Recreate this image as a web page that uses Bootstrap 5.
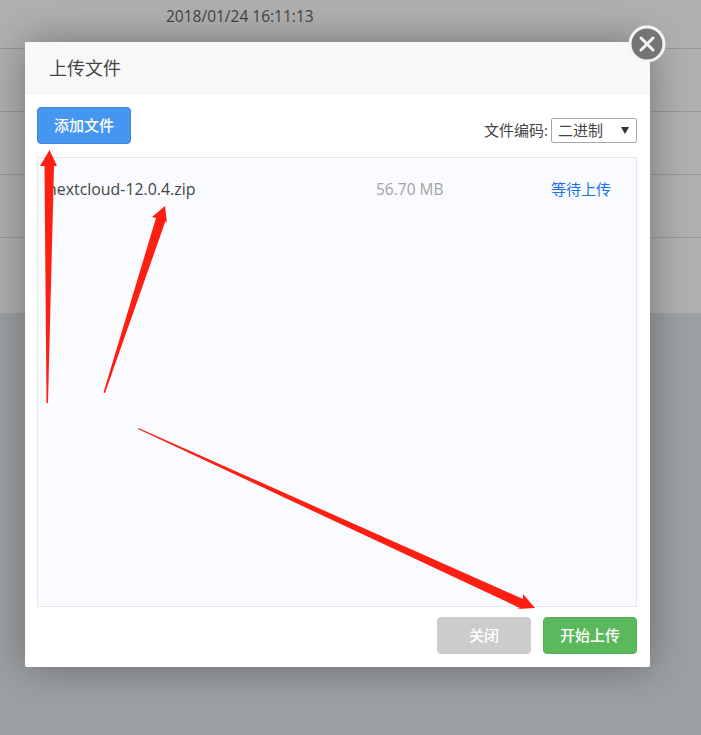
<!DOCTYPE html>
<html lang="zh"><head><meta charset="utf-8"><title>上传文件</title>
<link href="https://cdn.jsdelivr.net/npm/bootstrap@5.3.0/dist/css/bootstrap.min.css" rel="stylesheet">
<style>
html,body{height:100%;margin:0}
body{width:701px;height:735px;overflow:hidden;position:relative;background:#9da0a3;font-family:"Open Sans","Noto Sans CJK SC",sans-serif;font-size:15px;color:#444}
.bg-top{height:313px;background:#b0b0b0}
.bg-row{height:63px;border-bottom:1px solid #999;padding-left:166px;padding-top:7px;color:#444;line-height:19px;font-size:15.5px}
.bg-row:first-child{height:49px}
.up-modal{position:absolute;left:25px;top:42px;width:625px;height:625px;background:#fff;border-radius:2px;box-shadow:0 0 40px rgba(0,0,0,.35);display:flex;flex-direction:column}
.up-head{height:52px;flex:none;background:#f8f8f8;border-bottom:1px solid #eee;padding:0 24px;font-size:18px;line-height:52px;color:#444}
.up-body{padding:13px 13px 0 12px;flex:1;display:flex;flex-direction:column}
.up-bar{height:50px;flex:none}
.up-btn{width:94px;height:37px;padding:0 0 2px;font-size:15px;font-weight:500;color:#fff;border-radius:4px;line-height:32px}
.up-btn:disabled{opacity:1;color:#fff;background:#ccc;border:1px solid #ccc}
.up-blue{background:#4596f0;border:1px solid #3f87d8}
.up-green{background:#5cb85c;border:1px solid #55ae55}
.up-enc{margin-top:11px;gap:3px;line-height:25px}
.up-pick{position:relative;display:block;width:86px;height:25px}
.up-pick::after{content:"";position:absolute;left:70px;top:9px;border-style:solid;border-width:7px 4px 0;border-color:#333 transparent transparent}
.up-select{appearance:none;-webkit-appearance:none;display:block;width:86px;height:25px;border:1px solid #a6a6a6;border-radius:2px;background:#fff;padding:0 6px;font-size:15px;line-height:21px;color:#444;font-family:inherit}
.up-panel{height:450px;flex:none;background:#f9fbff;border:1px solid #e4e6ea;padding:21px 0 0 9px;line-height:20px}
.up-name{width:329px;font-size:15.9px}
.up-size{color:#a2a2a2;width:175px;font-size:15.5px}
.up-state{color:#1a73e8}
.up-foot{margin-top:10px;gap:12px}
.up-x{position:absolute;left:628px;top:25px;width:38px;height:38px}
.up-arrows{position:absolute;left:0;top:0;pointer-events:none}
</style></head>
<body>
<div class="bg-top">
<div class="bg-row">2018/01/24 16:11:13</div>
<div class="bg-row"></div><div class="bg-row"></div><div class="bg-row"></div>
</div>
<div class="up-modal">
<div class="up-head">上传文件</div>
<div class="up-body">
<div class="up-bar d-flex justify-content-between align-items-start">
<button class="btn up-btn up-blue">添加文件</button>
<div class="d-flex up-enc"><span>文件编码:</span><span class="up-pick"><select class="up-select"><option>二进制</option></select></span></div>
</div>
<div class="up-panel d-flex"><span class="up-name">nextcloud-12.0.4.zip</span><span class="up-size">56.70 MB</span><span class="up-state">等待上传</span></div>
<div class="up-foot d-flex justify-content-end">
<button class="btn up-btn" disabled>关闭</button>
<button class="btn up-btn up-green">开始上传</button>
</div>
</div>
</div>
<svg class="up-x" viewBox="0 0 38 38"><circle cx="19" cy="19" r="17" fill="#757575" stroke="#f4f4f4" stroke-width="3"/><path d="M13 13L25 25M25 13L13 25" stroke="#f2f2f2" stroke-width="3" stroke-linecap="round"/></svg>
<svg class="up-arrows" width="701" height="735" viewBox="0 0 701 735">
<g fill="#fd1f12">
<path d="M46.500 403L44.500 166L40 166L49.500 150L57 166L54 166L48 403Z"/>
<path d="M103.500 392.500L156 218L152 217L165 206L167 223L165.500 221L105 393Z"/>
<path d="M138 429L138.500 428L523 599L523 594L535 608L517 609L520 608Z"/>
</g></svg>
</body></html>
